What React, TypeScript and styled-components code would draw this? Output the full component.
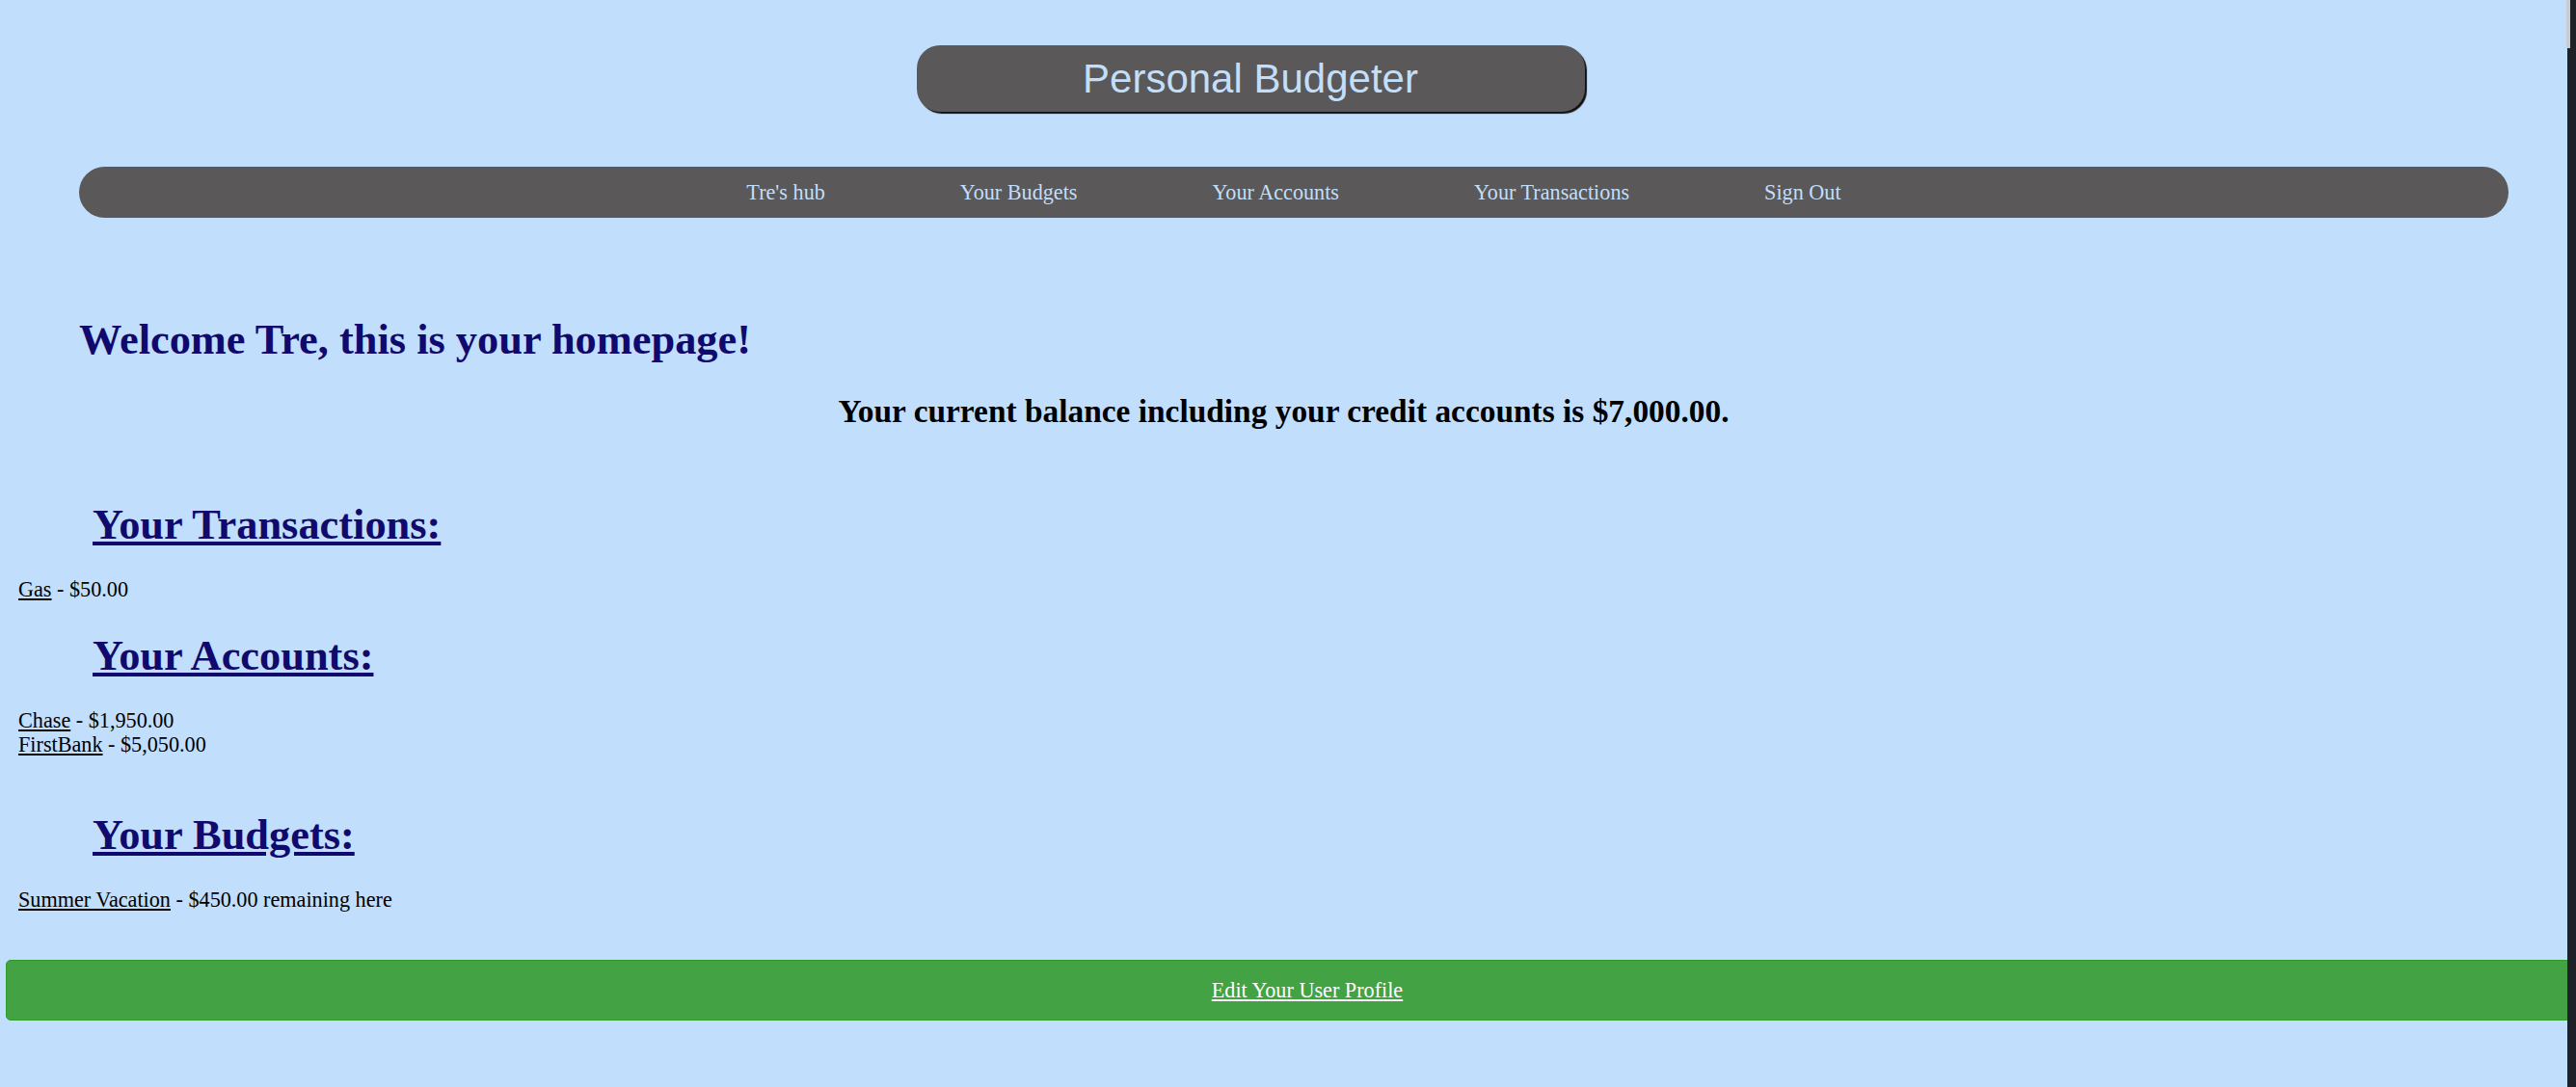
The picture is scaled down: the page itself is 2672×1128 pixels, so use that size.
import React from "react";
import styled, { createGlobalStyle } from "styled-components";

const GlobalStyle = createGlobalStyle`
  html, body {
    margin: 0;
    padding: 0;
    background: #c1defc;
  }
  body {
    font-family: "Liberation Serif", "Times New Roman", serif;
    color: #000;
  }
`;

const Shell = styled.div`
  display: flex;
  min-height: 100vh;
  background: #c1defc;
`;

const Page = styled.main`
  flex: 1;
  min-width: 0;
  overflow: hidden;
  padding-bottom: 40px;
`;

const WindowEdge = styled.div`
  position: relative;
  width: 9px;
  flex-shrink: 0;
  background: #1e2128;
  &::before {
    content: "";
    position: absolute;
    left: -1px;
    top: 0;
    width: 4px;
    height: 50px;
    background: #c9ccd2;
  }
`;

const HeaderRow = styled.header`
  display: flex;
  justify-content: center;
  padding-top: 47px;
  padding-right: 69px;
`;

const TitlePill = styled.h1`
  margin: 0;
  width: 693px;
  height: 69px;
  border-radius: 24px;
  background: #5a5858;
  box-shadow: 2px 2px 1px #111;
  color: #c3def8;
  font-family: "Liberation Sans", Arial, sans-serif;
  font-weight: 400;
  font-size: 42px;
  line-height: 69px;
  text-align: center;
`;

const NavBar = styled.nav`
  display: flex;
  justify-content: center;
  align-items: center;
  gap: 140px;
  height: 53px;
  margin: 57px 61px 0 82px;
  border-radius: 27px;
  background: #5a5858;
`;

const NavLink = styled.a`
  font-size: 22.2px;
  line-height: 25px;
  color: #c3def8;
  text-decoration: none;
  white-space: nowrap;
`;

const Welcome = styled.h1`
  margin: 101px 0 0 82px;
  font-size: 44.4px;
  line-height: 50px;
  font-weight: 700;
  color: #100a6e;
`;

const Balance = styled.h2`
  margin: 31px 0 0;
  font-size: 33.4px;
  line-height: 38px;
  font-weight: 700;
  text-align: center;
  color: #000;
`;

const SectionTitle = styled.h1<{ $spaceBefore: number }>`
  margin: ${(p) => p.$spaceBefore}px 0 0;
  padding-left: 96px;
  font-size: 44.4px;
  line-height: 50px;
  font-weight: 700;
  color: #100a6e;
  text-decoration: underline;
`;

const ItemList = styled.div`
  margin-top: 30px;
  padding-left: 19px;
  display: flex;
  flex-direction: column;
`;

const Item = styled.div`
  font-size: 22.2px;
  line-height: 25px;
  color: #000;
`;

const ItemLink = styled.a`
  color: #000;
  text-decoration: underline;
`;

const EditButton = styled.a`
  display: flex;
  align-items: center;
  justify-content: center;
  box-sizing: border-box;
  height: 63px;
  margin: 50px -43px 0 6px;
  border: 1px solid #2f9b28;
  border-radius: 5px;
  background: #43a243;
  color: #fff;
  font-size: 22.2px;
  line-height: 25px;
  text-decoration: underline;
`;

const navItems = ["Tre's hub", "Your Budgets", "Your Accounts", "Your Transactions", "Sign Out"];

type Entry = { name: string; detail: string };

const sections: { title: string; space: number; items: Entry[] }[] = [
  { title: "Your Transactions:", space: 73, items: [{ name: "Gas", detail: " - $50.00" }] },
  {
    title: "Your Accounts:",
    space: 31,
    items: [
      { name: "Chase", detail: " - $1,950.00" },
      { name: "FirstBank", detail: " - $5,050.00" },
    ],
  },
  {
    title: "Your Budgets:",
    space: 56,
    items: [{ name: "Summer Vacation", detail: " - $450.00 remaining here" }],
  },
];

export default function App() {
  return (
    <>
      <GlobalStyle />
      <Shell>
        <Page>
          <HeaderRow>
            <TitlePill>Personal Budgeter</TitlePill>
          </HeaderRow>
          <NavBar>
            {navItems.map((n) => (
              <NavLink key={n}>{n}</NavLink>
            ))}
          </NavBar>
          <Welcome>Welcome Tre, this is your homepage!</Welcome>
          <Balance>Your current balance including your credit accounts is $7,000.00.</Balance>
          {sections.map((s) => (
            <section key={s.title}>
              <SectionTitle $spaceBefore={s.space}>{s.title}</SectionTitle>
              <ItemList>
                {s.items.map((it) => (
                  <Item key={it.name}>
                    <ItemLink>{it.name}</ItemLink>
                    {it.detail}
                  </Item>
                ))}
              </ItemList>
            </section>
          ))}
          <EditButton>Edit Your User Profile</EditButton>
        </Page>
        <WindowEdge />
      </Shell>
    </>
  );
}
